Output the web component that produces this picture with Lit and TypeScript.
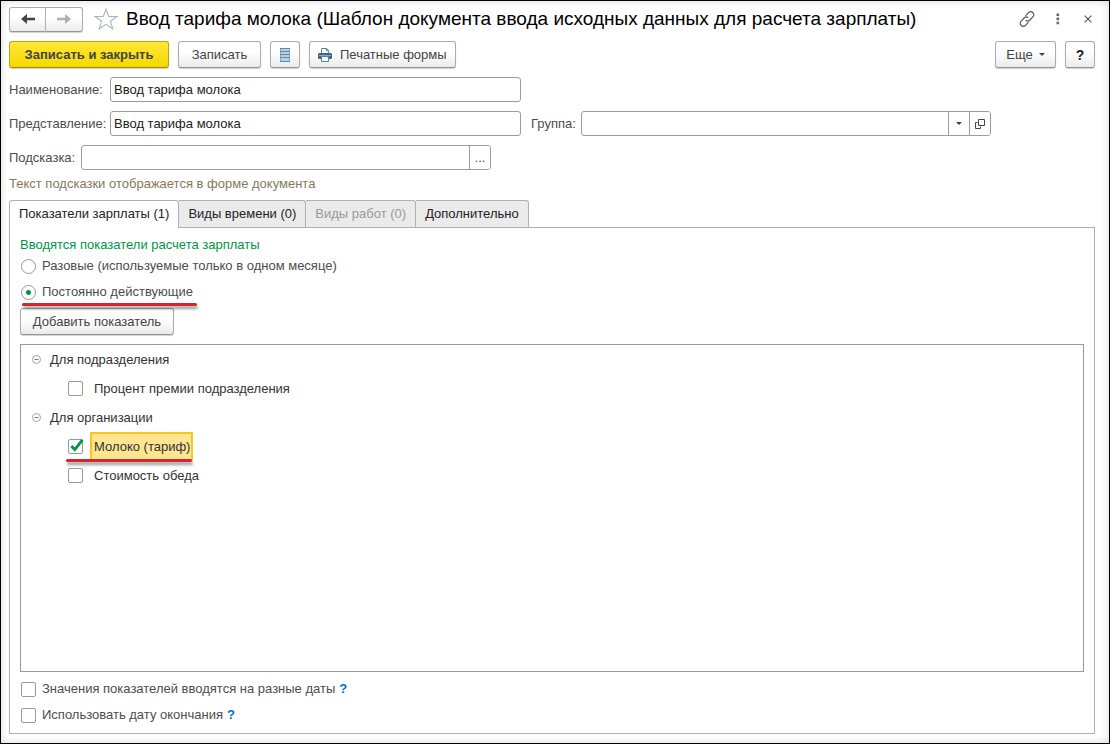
import { LitElement, html, css, svg } from "lit";
import { customElement, state } from "lit/decorators.js";

const icons = {
  back: svg`<svg width="16" height="12" viewBox="0 0 16 12" aria-hidden="true"><path d="M1 6 7 1v3.500L5 6l2 1.500V11z" fill="#444"/><path d="M4 6h11" stroke="#444" stroke-width="2.600"/></svg>`,
  forward: svg`<svg width="16" height="12" viewBox="0 0 16 12" aria-hidden="true"><path d="M15 6 9 1v3.500L11 6 9 7.500V11z" fill="#b0b0b0"/><path d="M12 6H1" stroke="#b0b0b0" stroke-width="2.600"/></svg>`,
  star: svg`<svg width="24" height="22" viewBox="0 0 24 22" aria-hidden="true"><path d="M12 1.2 14.7 8.4 22.8 8.6 16.4 13.3 18.8 20.8 12 16.4 5.2 20.8 7.6 13.3 1.2 8.6 9.3 8.4Z" fill="#fff" stroke="#a9b4bd" stroke-width="1.1"/></svg>`,
  link: svg`<svg width="16" height="16" viewBox="0 0 16 16" aria-hidden="true"><g fill="none" stroke="#555" stroke-width="1.2" stroke-linecap="round"><path d="M6.9 4.3 9.5 1.7a2.9 2.9 0 0 1 4.4 0 2.9 2.9 0 0 1 0 4.2L10.600 9.200a2.9 2.9 0 0 1-3.4.4"/><path d="M9.100 11.700 6.500 14.300a2.900 2.900 0 0 1-4.400 0 2.900 2.900 0 0 1 0-4.200L5.400 6.800a2.900 2.900 0 0 1 3.400-.4"/></g></svg>`,
  dots: svg`<svg width="4" height="12" viewBox="0 0 4 12" aria-hidden="true"><path d="M.5.500h2.600v2.600H.5zM.5 4.600h2.600v2.600H.5zM.5 8.700h2.600v2.600H.5z" fill="#666"/></svg>`,
  close: svg`<svg width="8" height="8" viewBox="0 0 8 8" aria-hidden="true"><path d="m.6.6 6.800 6.800M7.400.6.6 7.400" stroke="#555" stroke-width="1.100"/></svg>`,
  list: svg`<svg width="10" height="14" viewBox="0 0 10 14" aria-hidden="true"><rect width="10" height="14" rx=".5" fill="#b4d2e6"/><path d="M.5 0v14M9.500 0v14" stroke="#86a8c2"/><path d="M0 .5h10M0 3.500h10M0 6.500h10M0 9.500h10M0 13.500h10" stroke="#6289a8"/></svg>`,
  printer: svg`<svg width="14" height="14" viewBox="0 0 14 14" aria-hidden="true"><path d="M3.500 5V.5h5.200l2 2V5" fill="#fff" stroke="#5c7f9c"/><path d="M8.500.5v2.200h2.200" fill="none" stroke="#5c7f9c"/><rect y="5" width="14" height="6" rx="1.500" fill="#39678f"/><path d="M1 7.500h12" stroke="#86aac6"/><path d="M3.500 8.500h7v5h-7z" fill="#fff" stroke="#5c7f9c"/></svg>`,
  caret: svg`<svg width="6" height="3" viewBox="0 0 6 3" aria-hidden="true"><path d="M0 0h6L3 3z" fill="#444"/></svg>`,
  open: svg`<svg width="10" height="10" viewBox="0 0 10 10" aria-hidden="true"><path d="M3.500.5h6v6h-6zM2.500 3.500h-2v6h5v-2" fill="none" stroke="#444"/></svg>`,
  minus: svg`<svg width="9" height="9" viewBox="0 0 9 9" aria-hidden="true"><circle cx="4.500" cy="4.500" r="4" fill="#fff" stroke="#999" stroke-width=".9"/><path d="M2.500 4.500h4" stroke="#777"/></svg>`,
};

const tick = svg`<svg class="tick" width="16" height="15" viewBox="0 0 16 15" aria-hidden="true"><path d="M3.300 7 6.800 10.600 14.500.8" fill="none" stroke="#009646" stroke-width="2.800"/></svg>`;

@customElement("app-root")
export class AppRoot extends LitElement {
  @state() private activeTab = 0;
  @state() private checked: Record<string, boolean> = { milk: true };

  private tabs = [
    { title: "Показатели зарплаты (1)" },
    { title: "Виды времени (0)" },
    { title: "Виды работ (0)", disabled: true },
    { title: "Дополнительно" },
  ];

  private groups = [
    { title: "Для подразделения", items: [{ id: "bonus", title: "Процент премии подразделения" }] },
    {
      title: "Для организации",
      items: [
        { id: "milk", title: "Молоко (тариф)", marked: true },
        { id: "lunch", title: "Стоимость обеда" },
      ],
    },
  ];

  static styles = css`
    :host {
      display: block;
      font: 13px/16px "Liberation Sans", Arial, sans-serif;
      color: #4d4d4d;
    }
    * { box-sizing: border-box; }
    button, input { font: inherit; color: inherit; margin: 0; }
    svg { display: block; flex: none; }
    .window {
      display: flex;
      flex-direction: column;
      min-height: 100vh;
      border: 1px solid #000;
      padding: 6px 14px 9px 8px;
      background: #fff;
      box-shadow: inset 0 0 8px #d8d8d8;
    }
    .header { display: flex; align-items: center; height: 24px; }
    .btn {
      display: inline-flex;
      align-items: center;
      justify-content: center;
      height: 27px;
      padding: 0 13px;
      border: 1px solid #acacac;
      border-bottom-color: #959595;
      border-radius: 3px;
      background: linear-gradient(#fff 40%, #ebebeb);
      box-shadow: 0 1px 1px #d0d0d0;
      color: #444;
      white-space: nowrap;
    }
    .nav { display: flex; }
    .nav .btn { width: 37px; height: 25px; padding: 0; }
    .nav .btn:first-child { border-radius: 3px 0 0 3px; }
    .nav .btn:last-child { border-radius: 0 3px 3px 0; border-left: 0; }
    .plain { display: flex; justify-content: center; padding: 0; border: 0; background: none; }
    .star { margin-left: 11px; }
    h1 {
      flex: 1;
      margin: 0 0 0 8px;
      font-size: 19px;
      line-height: 24px;
      font-weight: 400;
      color: #000;
      white-space: nowrap;
    }
    .tools { display: flex; align-items: center; gap: 21px; }
    .close { width: 14px; }
    .toolbar { display: flex; gap: 9px; margin-top: 10px; }
    .primary {
      width: 160px;
      padding: 0;
      border-color: #c5a600;
      border-bottom-color: #a58b00;
      background: linear-gradient(#ffe838, #f5d800);
      font-weight: 700;
    }
    .save { width: 83px; padding: 0; }
    .square { width: 30px; padding: 0; }
    .print { width: 147px; padding: 0 8px; gap: 8px; justify-content: flex-start; }
    .more { width: 61px; padding: 0; gap: 6px; margin-left: auto; }
    .help { font-weight: 700; font-size: 14px; color: #222; }
    .row { display: flex; align-items: center; margin-top: 9px; }
    .row label { flex: none; }
    .caption { width: 101px; }
    .short { width: 72px; }
    .group { margin-left: 10px; width: 50px; }
    .field {
      display: flex;
      flex: 0 1 411px;
      min-width: 0;
      height: 25px;
      border: 1px solid #9c9c9c;
      border-radius: 3px;
      background: #fff;
      overflow: hidden;
    }
    .field.picker { flex-basis: 410px; }
    .field input {
      flex: 1;
      min-width: 0;
      padding: 0 3px;
      border: 0;
      outline: 0;
      background: none;
      color: #222;
    }
    .field button {
      display: flex;
      align-items: center;
      justify-content: center;
      width: 21px;
      padding: 0;
      border: 0;
      border-left: 1px solid #9c9c9c;
      background: #fff;
    }
    .hint { margin: 6px 0 8px; color: #857a5c; }
    .tabs { display: flex; }
    .tab {
      height: 27px;
      padding: 0 9px;
      border: 1px solid #b0b0b0;
      border-bottom: 0;
      border-left: 0;
      border-radius: 0 3px 0 0;
      background: #ebebeb;
      color: #222;
      white-space: nowrap;
    }
    .tab:first-child { border-left: 1px solid #b0b0b0; border-radius: 3px 3px 0 0; }
    .tab:disabled { color: #999; }
    .tab.active { height: 28px; margin-bottom: -1px; padding-bottom: 1px; background: #fff; z-index: 1; }
    .panel {
      display: flex;
      flex: 1;
      flex-direction: column;
      align-items: flex-start;
      border: 1px solid #b0b0b0;
      padding: 9px 10px 5px;
    }
    fieldset { border: 0; margin: 0; padding: 0; }
    legend { padding: 0; color: #009646; }
    .option { display: flex; align-items: center; height: 26px; gap: 4px; }
    .option label { display: flex; align-items: center; gap: 5px; }
    .option a { color: #0070c8; font-weight: 700; text-decoration: none; }
    .choice {
      appearance: none;
      width: 15px;
      height: 15px;
      margin: 0 1px;
      border: 1px solid #999;
      border-radius: 2px;
      background: #fff;
      flex: none;
    }
    .choice[type="radio"] { border-radius: 50%; }
    .choice[type="radio"]:checked { background: radial-gradient(circle, #009646 2px, #fff 3px); }
    .add { width: 154px; padding: 0; margin: 3px 0 9px; }
    .tree {
      flex: 1;
      align-self: stretch;
      margin: 0 0 4px;
      border: 1px solid #999;
      color: #333;
    }
    .branch, .leaf { display: flex; align-items: center; height: 29px; }
    .branch { padding-left: 11px; gap: 9px; }
    .leaf { padding-left: 46px; }
    .leaf label { display: flex; align-items: center; height: 29px; gap: 6px; }
    .leaf .text { padding: 0 4px; line-height: 29px; }
    .leaf .text.marked {
      border: 2px solid #fcc51c;
      padding: 0 1px 0 2px;
      line-height: 25px;
      background: #fde591;
    }
    .box { display: flex; position: relative; }
    .tick { position: absolute; left: 1px; top: 0; pointer-events: none; }
    .underlined { position: relative; }
    .underlined::after {
      content: "";
      position: absolute;
      left: 2px;
      right: -4px;
      bottom: -6px;
      height: 3px;
      border-radius: 2px;
      background: #d0262c;
      box-shadow: 1px 3px 3px #0006;
    }
    .leaf .underlined::after { left: -1px; right: 1px; bottom: -1px; }
  `;

  private toggle(id: string) {
    this.checked = { ...this.checked, [id]: !this.checked[id] };
  }

  render() {
    return html`
      <main class="window">
        <header class="header">
          <nav class="nav">
            <button class="btn" aria-label="Назад">${icons.back}</button>
            <button class="btn" aria-label="Вперед">${icons.forward}</button>
          </nav>
          <button class="plain star" aria-label="Избранное">${icons.star}</button>
          <h1>Ввод тарифа молока (Шаблон документа ввода исходных данных для расчета зарплаты)</h1>
          <div class="tools">
            <button class="plain" aria-label="Ссылка">${icons.link}</button>
            <button class="plain" aria-label="Меню">${icons.dots}</button>
            <button class="plain close" aria-label="Закрыть">${icons.close}</button>
          </div>
        </header>

        <div class="toolbar">
          <button class="btn primary">Записать и закрыть</button>
          <button class="btn save">Записать</button>
          <button class="btn square" aria-label="Список">${icons.list}</button>
          <button class="btn print">${icons.printer}Печатные формы</button>
          <button class="btn more">Еще ${icons.caret}</button>
          <button class="btn square help">?</button>
        </div>

        <div class="row">
          <label class="caption" for="name">Наименование:</label>
          <div class="field"><input id="name" .value=${"Ввод тарифа молока"} /></div>
        </div>
        <div class="row">
          <label class="caption" for="view">Представление:</label>
          <div class="field"><input id="view" .value=${"Ввод тарифа молока"} /></div>
          <label class="group" for="group">Группа:</label>
          <div class="field picker">
            <input id="group" />
            <button aria-label="Выбрать">${icons.caret}</button>
            <button aria-label="Открыть">${icons.open}</button>
          </div>
        </div>
        <div class="row">
          <label class="short" for="tip">Подсказка:</label>
          <div class="field picker"><input id="tip" /><button>...</button></div>
        </div>
        <p class="hint">Текст подсказки отображается в форме документа</p>

        <div class="tabs" role="tablist">
          ${this.tabs.map(
            (t, i) => html`<button
              class="tab ${i === this.activeTab ? "active" : ""}"
              role="tab"
              aria-selected=${i === this.activeTab}
              ?disabled=${t.disabled}
              @click=${() => (this.activeTab = i)}
            >${t.title}</button>`
          )}
        </div>
        <section class="panel" role="tabpanel">
          <fieldset>
            <legend>Вводятся показатели расчета зарплаты</legend>
            <div class="option">
              <label><input class="choice" type="radio" name="kind" />Разовые (используемые только в одном месяце)</label>
            </div>
            <div class="option">
              <label class="underlined"><input class="choice" type="radio" name="kind" checked />Постоянно действующие</label>
            </div>
          </fieldset>
          <button class="btn add">Добавить показатель</button>
          <div class="tree">
            ${this.groups.map(
              (g) => html`
                <div class="branch"><button class="plain" aria-label="Свернуть">${icons.minus}</button>${g.title}</div>
                ${g.items.map(
                  (item: { id: string; title: string; marked?: boolean }) => html`<div class="leaf">
                    <label class=${item.marked ? "underlined" : ""}>
                      <span class="box">
                        <input class="choice" type="checkbox" .checked=${!!this.checked[item.id]} @change=${() => this.toggle(item.id)} />
                        ${this.checked[item.id] ? tick : ""}
                      </span>
                      <span class="text ${item.marked ? "marked" : ""}">${item.title}</span>
                    </label>
                  </div>`
                )}
              `
            )}
          </div>
          <div class="option">
            <label><input class="choice" type="checkbox" />Значения показателей вводятся на разные даты</label>
            <a href="#dates">?</a>
          </div>
          <div class="option">
            <label><input class="choice" type="checkbox" />Использовать дату окончания</label>
            <a href="#end">?</a>
          </div>
        </section>
      </main>
    `;
  }
}
